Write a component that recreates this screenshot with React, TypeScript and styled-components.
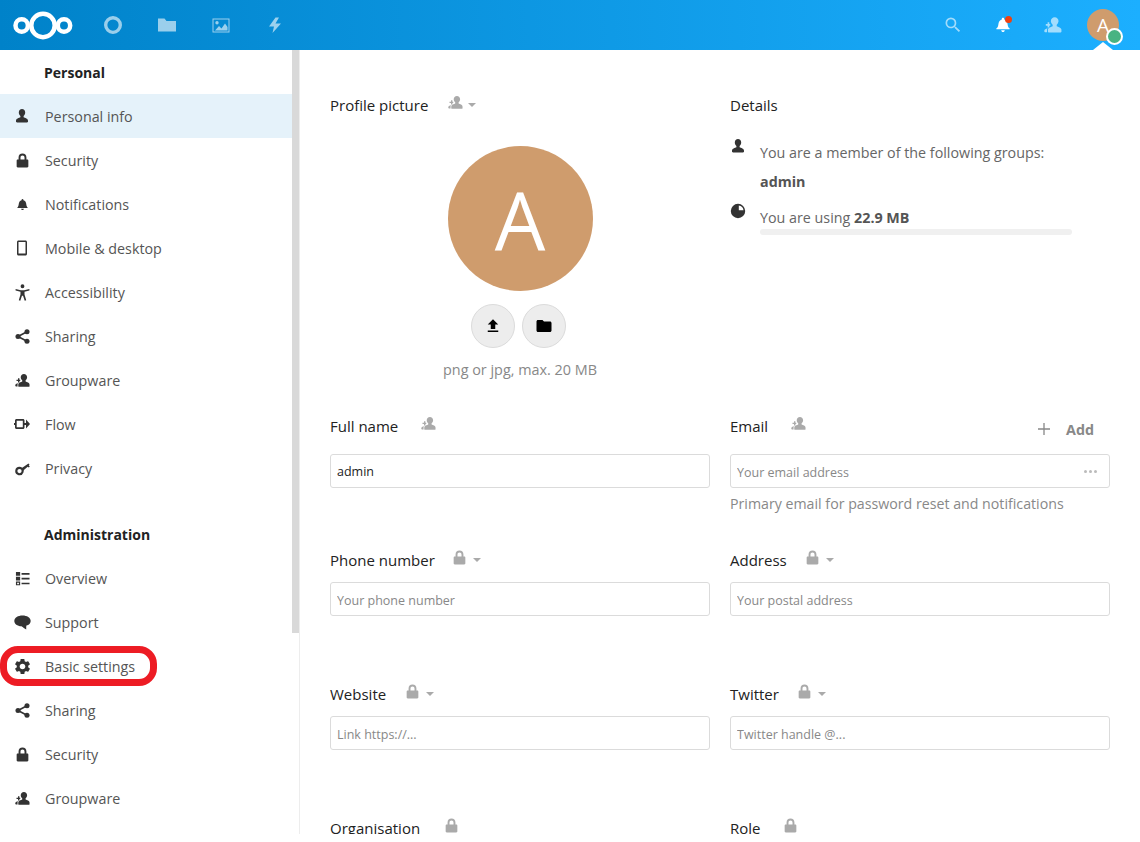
import React from 'react'
import styled, { createGlobalStyle } from 'styled-components'
import { MdFileUpload, MdFolder, MdSearch, MdSettings } from 'react-icons/md'

const GlobalStyle = createGlobalStyle`
  html, body {
    margin: 0;
    padding: 0;
    background: #fff;
    font-family: 'Open Sans', 'Noto Sans', sans-serif;
    color: #222;
  }
  * {
    box-sizing: border-box;
  }
`

const Page = styled.div`
  height: 834px;
  overflow: hidden;
  display: flex;
  flex-direction: column;
`

const Header = styled.header`
  height: 50px;
  flex: none;
  display: flex;
  align-items: center;
  background: linear-gradient(88deg, #0082c9 0%, #1cafff 100%);
`

const Logo = styled.svg`
  width: 62px;
  height: 30px;
  margin-left: 12px;
  margin-right: 12px;
  flex: none;
`

const NavSlot = styled.div<{ $faded?: boolean; $w?: number }>`
  width: ${(p) => p.$w ?? 54}px;
  height: 50px;
  flex: none;
  display: flex;
  align-items: center;
  justify-content: center;
  color: #fff;
  opacity: ${(p) => (p.$faded ? 0.6 : 1)};
  position: relative;
`

const HeaderRight = styled.div`
  margin-left: auto;
  display: flex;
  align-items: center;
  padding-right: 12px;
`

const UserSlot = styled.div`
  position: relative;
  width: 50px;
  height: 50px;
  display: flex;
  align-items: center;
  justify-content: center;
`

const HeaderAvatar = styled.div`
  width: 32px;
  height: 32px;
  border-radius: 50%;
  background: #cf9c6d;
  color: #fff;
  font-size: 19px;
  line-height: 32px;
  text-align: center;
`

const StatusDot = styled.span`
  position: absolute;
  left: 28px;
  top: 28px;
  width: 17px;
  height: 17px;
  border-radius: 50%;
  background: #49b382;
  border: 2px solid #fff;
`

const Caret = styled.span`
  position: absolute;
  left: 15px;
  bottom: 0;
  border-left: 10px solid transparent;
  border-right: 10px solid transparent;
  border-bottom: 8px solid #fff;
`

const NotifyDot = styled.span`
  position: absolute;
  left: 27px;
  top: 16px;
  width: 7px;
  height: 7px;
  border-radius: 50%;
  background: #f0400f;
`

const Body = styled.div`
  flex: 1;
  display: flex;
  min-height: 0;
`

const Sidebar = styled.nav`
  position: relative;
  width: 300px;
  flex: none;
  padding-right: 7px;
  border-right: 1px solid #ededed;
  overflow: hidden;
`

const ScrollThumb = styled.div`
  position: absolute;
  top: 0;
  right: 0;
  width: 7px;
  height: 583px;
  background: #d9d9d9;
`

const SideHeading = styled.h2<{ $spaced?: boolean }>`
  margin: ${(p) => (p.$spaced ? '22px' : '0')} 0 0;
  height: 44px;
  padding-left: 44px;
  font-size: 14px;
  font-weight: 700;
  line-height: 45px;
  color: #222;
`

const SideItem = styled.a<{ $active?: boolean }>`
  position: relative;
  height: 44px;
  display: flex;
  align-items: center;
  font-size: 14.3px;
  color: #555;
  background: ${(p) => (p.$active ? '#e5f2fa' : 'transparent')};
`

const SideIcon = styled.span`
  width: 45px;
  flex: none;
  display: flex;
  justify-content: center;
  padding-right: 1px;
  color: #333;
`

const Callout = styled.span`
  position: absolute;
  left: 0;
  top: 2px;
  width: 157px;
  height: 40px;
  border: 7px solid #ed1c24;
  border-radius: 18px;
  pointer-events: none;
`

const Main = styled.main`
  flex: 1;
  min-width: 0;
  overflow: hidden;
  padding: 44px 30px 0;
  display: grid;
  grid-template-columns: 380px 380px;
  column-gap: 20px;
  align-content: start;
`

const Section = styled.section<{ $height: number }>`
  height: ${(p) => p.$height}px;
`

const LabelRow = styled.div`
  position: relative;
  height: 22px;
  display: flex;
  align-items: center;
  font-size: 15px;
  color: #222;
`

const Scope = styled.span<{ $gap?: number }>`
  display: inline-flex;
  align-items: center;
  margin-left: ${(p) => p.$gap ?? 20}px;
  margin-top: -6px;
  color: #aaa;
`

const ScopeCaret = styled.span`
  margin-left: 5px;
  margin-top: 5px;
  border-left: 4px solid transparent;
  border-right: 4px solid transparent;
  border-top: 4px solid #aaa;
`

const AddAction = styled.span`
  margin-left: auto;
  margin-right: 16px;
  margin-top: 6px;
  display: flex;
  align-items: center;
  gap: 16px;
  font-size: 14.3px;
  font-weight: 700;
  color: #888;
`

const PlusGlyph = styled.svg`
  width: 12px;
  height: 12px;
`

const FieldWrap = styled.div<{ $top?: number }>`
  position: relative;
  margin-top: ${(p) => p.$top ?? 11}px;
`

const Input = styled.input`
  display: block;
  width: 100%;
  height: 34px;
  padding: 0 6px;
  border: 1px solid #dbdbdb;
  border-radius: 3px;
  background: #fff;
  font-family: inherit;
  font-size: 12.5px;
  color: #222;
  outline: none;

  &:placeholder-shown {
    padding-top: 2px;
  }

  &::placeholder {
    color: #888;
    opacity: 1;
  }
`

const MoreDots = styled.span`
  position: absolute;
  right: 13px;
  top: 16px;
  display: flex;
  gap: 2px;

  i {
    width: 3px;
    height: 3px;
    border-radius: 50%;
    background: #bbb;
  }
`

const Hint = styled.p`
  margin: 6px 0 0;
  font-size: 14.2px;
  line-height: 20px;
  color: #888;
`

const AvatarBlock = styled.div`
  margin-top: 30px;
  display: flex;
  flex-direction: column;
  align-items: center;
`

const BigAvatar = styled.div`
  width: 145px;
  height: 145px;
  border-radius: 50%;
  background: #cf9c6d;
  color: #fff;
  font-size: 80px;
  line-height: 145px;
  text-align: center;
`

const AvatarActions = styled.div`
  margin-top: 13px;
  margin-right: 3px;
  display: flex;
  gap: 7px;
`

const RoundButton = styled.button`
  width: 44px;
  height: 44px;
  padding: 0;
  border: 1px solid #dbdbdb;
  border-radius: 50%;
  background: #ededed;
  color: #000;
  display: flex;
  align-items: center;
  justify-content: center;
`

const AvatarNote = styled.div`
  margin-top: 12px;
  font-size: 14.4px;
  line-height: 20px;
  color: #888;
`

const DetailRow = styled.div<{ $top: number }>`
  display: flex;
  margin-top: ${(p) => p.$top}px;
  font-size: 14.3px;
  line-height: 20px;
  color: #666;

  b {
    color: #555;
  }
`

const DetailIcon = styled.span`
  width: 30px;
  flex: none;
  margin-top: -5px;
  color: #333;
`

const DetailBody = styled.div`
  flex: 1;
`

const GroupName = styled.div`
  margin-top: 9px;
  font-weight: 700;
  color: #555;
`

const Quota = styled.div`
  width: 312px;
  height: 6px;
  margin-top: 1px;
  border-radius: 3px;
  background: #f0f0f0;
`

const Glyph = styled.svg<{ $w?: number; $h?: number }>`
  display: block;
  width: ${(p) => p.$w ?? 16}px;
  height: ${(p) => p.$h ?? 16}px;
  fill: currentColor;
`

const icons: Record<string, React.ReactNode> = {
  user: (
    <path d="M8 1c-1.900 0-3.200 1.500-3.200 3.500 0 1.400.7 2.700 1.600 3.400v1.400C5 10 2 10.700 2 12.600v1c0 .6.5.9 1.100.9h9.800c.6 0 1.100-.3 1.100-.9v-1c0-1.900-3-2.600-4.400-3.300V7.900c.9-.7 1.600-2 1.600-3.400C11.200 2.500 9.900 1 8 1z" />
  ),
  contacts: (
    <>
      <path d="M9.500 1c-2 0-3.400 1.500-3.400 3.500 0 1.300.7 2.600 1.600 3.300v1.300C6.300 9.800 3.500 10.400 3.500 12.300V14c0 .5.4.7.9.7h10c.6 0 1.100-.2 1.100-.7v-1.700c0-1.900-2.800-2.500-4.200-3.200V7.800c.9-.7 1.600-2 1.600-3.300 0-2-1.400-3.500-3.400-3.500z" />
      <path d="M3.200 5.500v1.600H1.600v1.500h1.600v1.600h1.500V8.600h.9V7.100h-.9V5.500z" />
      <path d="M2.900 10.800C1.700 11.300.3 11.700.3 12.900v.8c0 .5.4.7.9.7h1.500v-2c0-.9.3-1.700.9-2.600z" />
    </>
  ),
  lock: (
    <path
      fillRule="evenodd"
      d="M8 1.500C5.700 1.500 4.300 3 4.300 5.200V7H3.500c-.6 0-1 .4-1 1v5.500c0 .6.4 1 1 1h9c.6 0 1-.4 1-1V8c0-.6-.4-1-1-1h-.8V5.200C11.700 3 10.300 1.500 8 1.500zM8 3.300c1.200 0 1.900.8 1.900 2V7H6.100V5.300c0-1.200.7-2 1.900-2z"
    />
  ),
  bell: (
    <path d="M8 2.200c-.6 0-1 .4-1 1v.3C5.200 4 4.200 5.500 4 7.500c-.2 1.800-.6 3-1.500 3.700v.6h11v-.6c-.9-.7-1.300-1.900-1.500-3.700-.2-2-1.200-3.500-3-4v-.3c0-.6-.4-1-1-1zM6.500 12.600c.1.8.7 1.300 1.500 1.300s1.400-.5 1.500-1.300h-3z" />
  ),
  phone: (
    <path
      fillRule="evenodd"
      d="M4.500.5h7c.8 0 1.500.7 1.500 1.500v12c0 .8-.7 1.500-1.500 1.500h-7C3.700 15.500 3 14.800 3 14V2c0-.8.7-1.500 1.500-1.500zM4.500 2v11.500h7V2z"
    />
  ),
  access: (
    <path d="M8 .3a1.800 1.800 0 1 0 0 3.600A1.800 1.800 0 0 0 8 .3zM1.500 4.600V6l4.600 1.300v2.500L4.500 15.300l1.400.5L7.500 11h1l1.600 4.800 1.400-.5-1.600-5.500V7.300L14.500 6V4.600L9.500 5.800h-3z" />
  ),
  share: (
    <>
      <circle cx="3.200" cy="8" r="2.700" />
      <circle cx="12.800" cy="3" r="2.700" />
      <circle cx="12.800" cy="13" r="2.700" />
      <path d="M3.200 8l9.600-5M3.200 8l9.600 5" stroke="currentColor" strokeWidth="1.700" fill="none" />
    </>
  ),
  flow: (
    <path
      fillRule="evenodd"
      d="M2.500 3h6.500c.8 0 1.500.7 1.500 1.500V7h1.500V3.500L16 8l-4 4.500V9h-1.500v2.500c0 .8-.7 1.500-1.500 1.500H2.500C1.700 13 1 12.300 1 11.500V9H0V7h1V4.500C1 3.700 1.700 3 2.500 3zM2.700 4.700v6.600h6.100V4.700z"
    />
  ),
  key: (
    <path
      fillRule="evenodd"
      d="M4.800 6.200a4.500 4.500 0 1 0 4.200 6L9.500 9.600 13.500 6l1.200 1 1.100-1.200-1.200-1 .9-.8L14.400 2.700 7.700 7.200A4.500 4.500 0 0 0 4.800 6.200zM4.800 8.400a2.300 2.300 0 1 1 0 4.600 2.300 2.300 0 0 1 0-4.600z"
    />
  ),
  overview: (
    <>
      <path d="M1 1h4.500v4H1zM1 6.200h4.500v4H1z" />
      <path fillRule="evenodd" d="M1 11.300h4.500v3.900H1zM2.300 12.500v1.500h1.900v-1.500z" />
      <path d="M7 2.200h8.500v1.800H7zM7 7.300h8.500v1.800H7zM7 12.400h8.500v1.800H7z" />
    </>
  ),
  support: (
    <path d="M8 1.500C3.800 1.500.3 3.500.3 6.500c0 2.800 2.800 4.800 6.700 5 1.500.9 3 2.300 4.500 3 .1-1.200-.1-2.600.2-3.600 2.400-.7 4-2.300 4-4.400 0-3-3.500-5-7.700-5z" />
  ),
  quota: (
    <path
      fillRule="evenodd"
      d="M8 .8a7.200 7.200 0 1 0 0 14.400A7.200 7.200 0 0 0 8 .8zM8.800 2.500a5.600 5.600 0 0 1 4.700 4.700H8.800z"
    />
  ),
  circle: (
    <path
      fillRule="evenodd"
      d="M8 0a8 8 0 1 0 0 16A8 8 0 0 0 8 0zm0 3a5 5 0 1 1 0 10A5 5 0 0 1 8 3z"
    />
  ),
  folder: <path d="M0 1.500h6.500l2 2.500H18v10.500H0z" />,
  image: (
    <path
      fillRule="evenodd"
      d="M.5.500h17v14H.5zM1.500 1.500v12h15v-12zM3 12.500l4-4.500 2.500 2.500 3.500-5 2.500 3.500v3.500zM5 3a1.700 1.700 0 1 1 0 3.400A1.700 1.700 0 0 1 5 3z"
    />
  ),
  bolt: <path d="M8.500.5L2 9.500h5L5.500 16 14 6.500H8.500L12 .5z" />,
  headerBell: (
    <path d="M8 .8c-.7 0-1.200.5-1.200 1.200v.4C4.600 3 3.600 4.900 3.400 7.200c-.2 2-.7 3.300-2 4.100v1h13.200v-1c-1.300-.8-1.800-2.100-2-4.100-.2-2.300-1.200-4.200-3.400-4.800V2C9.200 1.300 8.700.8 8 .8zM6.200 13.200c.1 1 .9 1.800 1.800 1.800s1.700-.8 1.800-1.800z" />
  ),
}

type TIconProps = { name: string; w?: number; h?: number; box?: string }

const Icon = ({ name, w, h, box = '0 0 16 16' }: TIconProps) => (
  <Glyph $w={w} $h={h} viewBox={box}>
    {icons[name]}
  </Glyph>
)

const personal: [string, string, number][] = [
  ['user', 'Personal info', 16],
  ['lock', 'Security', 17],
  ['bell', 'Notifications', 15],
  ['phone', 'Mobile & desktop', 16],
  ['access', 'Accessibility', 17],
  ['share', 'Sharing', 15],
  ['contacts', 'Groupware', 15],
  ['flow', 'Flow', 16],
  ['key', 'Privacy', 15],
]

const administration: [string, string, number][] = [
  ['overview', 'Overview', 15],
  ['support', 'Support', 17],
  ['gear', 'Basic settings', 19],
  ['share', 'Sharing', 15],
  ['lock', 'Security', 17],
  ['contacts', 'Groupware', 15],
]

const SideRow = ({ icon, label, size, active }: { icon: string; label: string; size: number; active?: boolean }) => (
  <SideItem $active={active}>
    <SideIcon>
      {icon === 'gear' ? <MdSettings size={size} /> : <Icon name={icon} w={size} h={size} />}
    </SideIcon>
    {label}
    {label === 'Basic settings' && <Callout />}
  </SideItem>
)

const ScopeMark = ({ icon, caret, gap }: { icon: string; caret?: boolean; gap?: number }) => (
  <Scope $gap={gap}>
    <Icon name={icon} w={icon === 'lock' ? 17 : 15} h={icon === 'lock' ? 17 : 15} />
    {caret && <ScopeCaret />}
  </Scope>
)

export default function App() {
  return (
    <Page>
      <GlobalStyle />
      <Header>
        <Logo viewBox="0 0 62 30" fill="none" stroke="#fff">
          <circle cx="31" cy="15.500" r="11.700" strokeWidth="4.500" />
          <circle cx="9.700" cy="15.500" r="6.200" strokeWidth="4.500" />
          <circle cx="52" cy="15.500" r="6.200" strokeWidth="4.500" />
        </Logo>
        <NavSlot $faded>
          <Icon name="circle" w={18} h={18} />
        </NavSlot>
        <NavSlot $faded>
          <Icon name="folder" w={18} h={16} box="0 0 18 16" />
        </NavSlot>
        <NavSlot $faded>
          <Icon name="image" w={18} h={15} box="0 0 18 15" />
        </NavSlot>
        <NavSlot $faded>
          <Icon name="bolt" w={16} h={18} />
        </NavSlot>
        <HeaderRight>
          <NavSlot $faded $w={50}>
            <MdSearch size={20} />
          </NavSlot>
          <NavSlot $w={50}>
            <Icon name="headerBell" w={16} h={16} />
            <NotifyDot />
          </NavSlot>
          <NavSlot $faded $w={50}>
            <Icon name="contacts" w={18} h={18} />
          </NavSlot>
          <UserSlot>
            <HeaderAvatar>A</HeaderAvatar>
            <StatusDot />
            <Caret />
          </UserSlot>
        </HeaderRight>
      </Header>
      <Body>
        <Sidebar>
          <ScrollThumb />
          <SideHeading>Personal</SideHeading>
          {personal.map(([icon, label, size], i) => (
            <SideRow key={label} icon={icon} label={label} size={size} active={i === 0} />
          ))}
          <SideHeading $spaced>Administration</SideHeading>
          {administration.map(([icon, label, size]) => (
            <SideRow key={label} icon={icon} label={label} size={size} />
          ))}
        </Sidebar>
        <Main>
          <Section $height={321}>
            <LabelRow>
              Profile picture
              <ScopeMark icon="contacts" caret />
            </LabelRow>
            <AvatarBlock>
              <BigAvatar>A</BigAvatar>
              <AvatarActions>
                <RoundButton>
                  <MdFileUpload size={18} />
                </RoundButton>
                <RoundButton>
                  <MdFolder size={18} />
                </RoundButton>
              </AvatarActions>
              <AvatarNote>png or jpg, max. 20 MB</AvatarNote>
            </AvatarBlock>
          </Section>
          <Section $height={321}>
            <LabelRow>Details</LabelRow>
            <DetailRow $top={27}>
              <DetailIcon>
                <Icon name="user" />
              </DetailIcon>
              <DetailBody>
                You are a member of the following groups:
                <GroupName>admin</GroupName>
              </DetailBody>
            </DetailRow>
            <DetailRow $top={16}>
              <DetailIcon>
                <Icon name="quota" />
              </DetailIcon>
              <DetailBody>
                You are using <b>22.9 MB</b>
                <Quota />
              </DetailBody>
            </DetailRow>
          </Section>

          <Section $height={134}>
            <LabelRow>
              Full name
              <ScopeMark icon="contacts" gap={23} />
            </LabelRow>
            <FieldWrap $top={17}>
              <Input readOnly value="admin" />
            </FieldWrap>
          </Section>
          <Section $height={134}>
            <LabelRow>
              Email
              <ScopeMark icon="contacts" gap={23} />
              <AddAction>
                <PlusGlyph viewBox="0 0 12 12">
                  <path d="M6 0v12M0 6h12" stroke="#888" strokeWidth="1.300" />
                </PlusGlyph>
                Add
              </AddAction>
            </LabelRow>
            <FieldWrap $top={17}>
              <Input readOnly placeholder="Your email address" />
              <MoreDots>
                <i />
                <i />
                <i />
              </MoreDots>
            </FieldWrap>
            <Hint>Primary email for password reset and notifications</Hint>
          </Section>

          <Section $height={134}>
            <LabelRow>
              Phone number
              <ScopeMark icon="lock" caret gap={16} />
            </LabelRow>
            <FieldWrap>
              <Input readOnly placeholder="Your phone number" />
            </FieldWrap>
          </Section>
          <Section $height={134}>
            <LabelRow>
              Address
              <ScopeMark icon="lock" caret gap={17} />
            </LabelRow>
            <FieldWrap>
              <Input readOnly placeholder="Your postal address" />
            </FieldWrap>
          </Section>

          <Section $height={134}>
            <LabelRow>
              Website
              <ScopeMark icon="lock" caret gap={18} />
            </LabelRow>
            <FieldWrap>
              <Input readOnly placeholder="Link https://..." />
            </FieldWrap>
          </Section>
          <Section $height={134}>
            <LabelRow>
              Twitter
              <ScopeMark icon="lock" caret gap={17} />
            </LabelRow>
            <FieldWrap>
              <Input readOnly placeholder="Twitter handle @..." />
            </FieldWrap>
          </Section>

          <Section $height={134}>
            <LabelRow>
              Organisation
              <ScopeMark icon="lock" gap={23} />
            </LabelRow>
          </Section>
          <Section $height={134}>
            <LabelRow>
              Role
              <ScopeMark icon="lock" gap={21} />
            </LabelRow>
          </Section>
        </Main>
      </Body>
    </Page>
  )
}
